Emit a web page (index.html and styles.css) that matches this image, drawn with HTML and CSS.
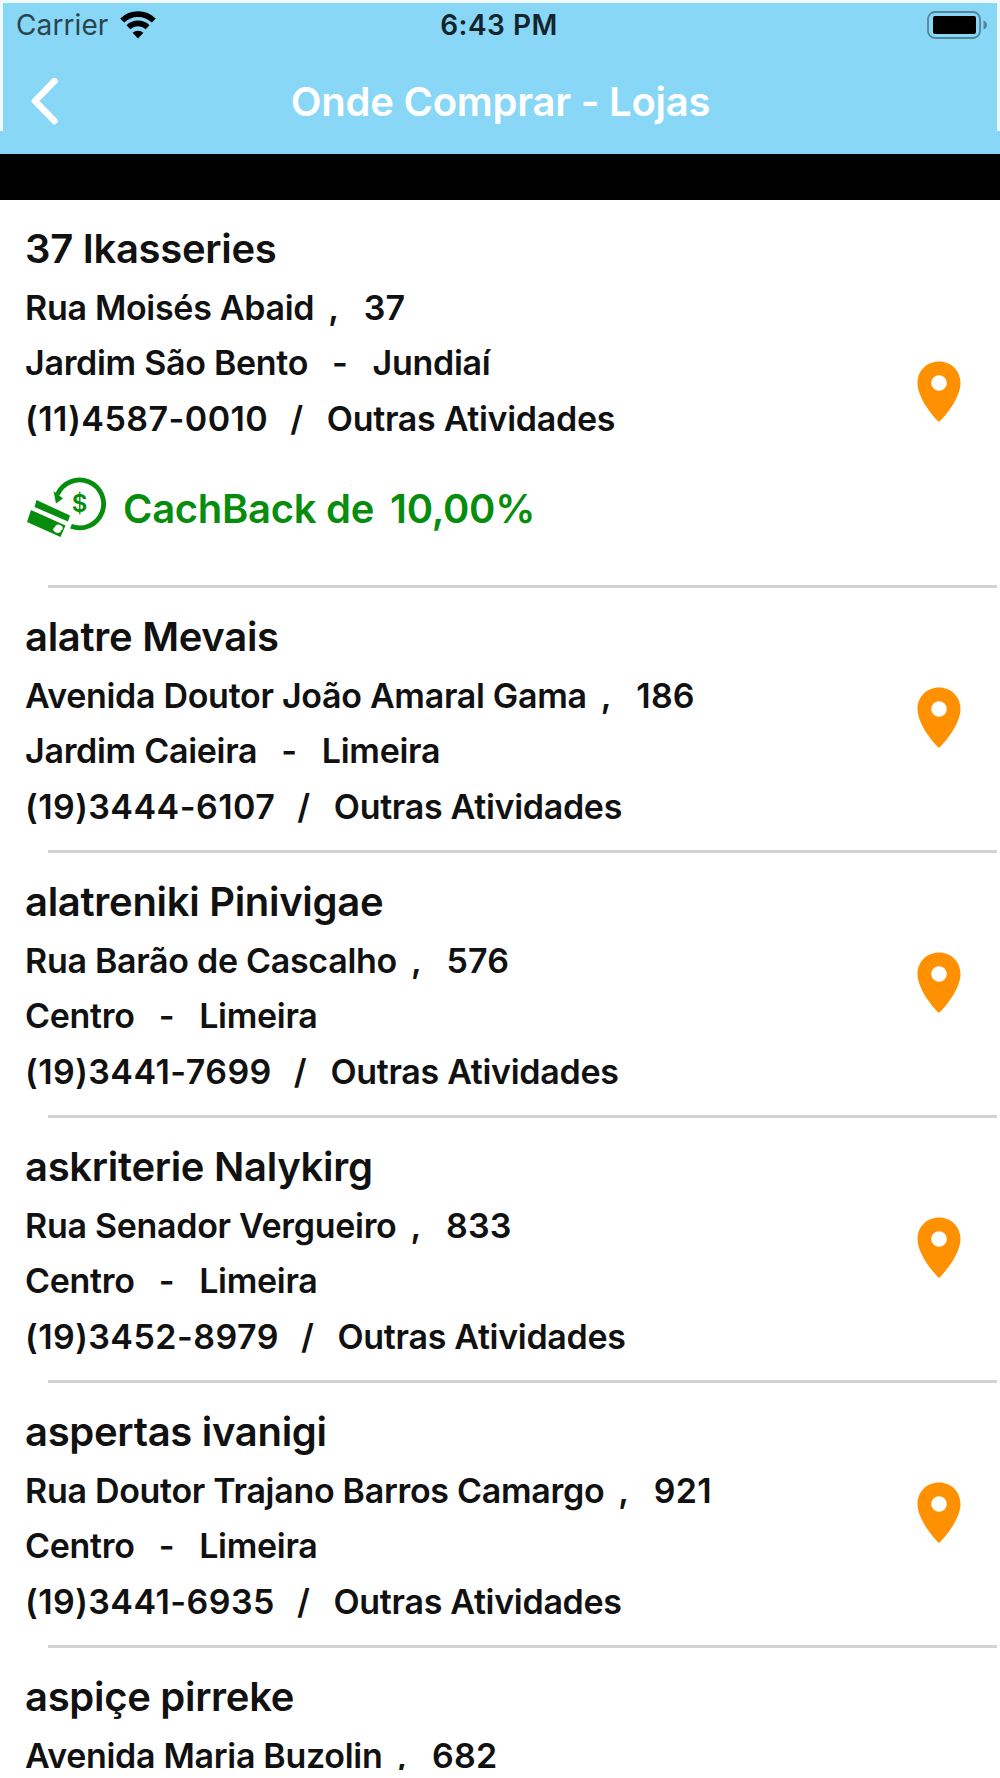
FILE: index.html
```html
<!DOCTYPE html>
<html lang="pt-br">
<head>
<meta charset="UTF-8">
<title>Onde Comprar - Lojas</title>
<link rel="stylesheet" href="styles.css">
</head>
<body>

<!-- shared icons -->
<svg class="defs" width="0" height="0">
	<symbol id="pin" viewBox="0 0 44 62">
		<path fill-rule="evenodd" d="M22 0.500C9.800 0.500 0.500 9.800 0.500 22C0.500 36 14.500 54 22 61C29.500 54 43.500 36 43.500 22C43.500 9.800 34.200 0.500 22 0.500ZM22 14.200A7.800 7.800 0 1 1 22 29.800A7.800 7.800 0 1 1 22 14.200Z"/>
	</symbol>
</svg>

<div class="screen">

<header class="header">
	<div class="status">
		<div class="carrier">
			<span>Carrier</span>
			<svg class="wifi" width="36" height="28" viewBox="0 0 36 28">
				<path d="M2.200 9.600A22.500 22.500 0 0 1 33.800 9.600M8.400 16.200A14 14 0 0 1 27.600 16.200" fill="none" stroke="#000" stroke-width="5.600"/>
				<path d="M18 27.500L12.600 21.800A8 8 0 0 1 23.400 21.800Z"/>
			</svg>
		</div>
		<div class="clock">6:43 PM</div>
		<svg class="battery" width="62" height="28" viewBox="0 0 62 28">
			<rect x="2" y="1" width="52" height="26" rx="7" fill="none" stroke="#548698" stroke-width="1.800"/>
			<rect x="7" y="5" width="43" height="18" rx="2"/>
			<path d="M57.500 9.500Q61 11 61 14T57.500 18.500Z" fill="#548698"/>
		</svg>
	</div>
	<div class="navbar">
		<svg class="back" width="30" height="48" viewBox="0 0 30 48">
			<path d="M24.500 3L5 23L24.500 43"/>
		</svg>
		<h1 class="title">Onde Comprar - Lojas</h1>
	</div>
</header>

<div class="banner"></div>

<ul class="stores">
	<li class="store store-cashback">
		<div class="store-main">
			<div class="info">
				<h2 class="name">37 Ikasseries</h2>
				<p class="line address"><span>Rua Moisés Abaid</span><i>,</i><span>37</span></p>
				<p class="line city"><span>Jardim São Bento</span><i>-</i><span>Jundiaí</span></p>
				<p class="line contact"><span class="phone">(11)4587-0010</span><i>/</i><span>Outras Atividades</span></p>
				<div class="cashback">
					<svg width="80" height="64" viewBox="0 0 80 64">
						<path d="M30.500 18.500A24 24 0 1 1 44 50.300" fill="none" stroke="#078d0d" stroke-width="4.800"/>
						<path d="M26.500 15L36 22.500L29 27.500Z"/>
						<path d="M9.500 24L43 39.500L41 45.500L7.500 31Z"/>
						<path fill-rule="evenodd" d="M4 34L38.500 49.500L33.500 61L0 46ZM28 51A4 3 20 1 0 34 54.500A4 3 20 1 0 28 51Z"/>
						<text x="52.500" y="36" class="dollar">$</text>
					</svg>
					<span>CachBack de</span><span>10,00%</span>
				</div>
			</div>
			<svg class="pin"><use href="#pin"/></svg>
		</div>
		<div class="divider"></div>
	</li>
	<li class="store">
		<div class="store-main">
			<div class="info">
				<h2 class="name">alatre Mevais</h2>
				<p class="line address"><span>Avenida Doutor João Amaral Gama</span><i>,</i><span>186</span></p>
				<p class="line city"><span>Jardim Caieira</span><i>-</i><span>Limeira</span></p>
				<p class="line contact"><span class="phone">(19)3444-6107</span><i>/</i><span>Outras Atividades</span></p>
			</div>
			<svg class="pin"><use href="#pin"/></svg>
		</div>
		<div class="divider"></div>
	</li>
	<li class="store">
		<div class="store-main">
			<div class="info">
				<h2 class="name">alatreniki Pinivigae</h2>
				<p class="line address"><span>Rua Barão de Cascalho</span><i>,</i><span>576</span></p>
				<p class="line city"><span>Centro</span><i>-</i><span>Limeira</span></p>
				<p class="line contact"><span class="phone">(19)3441-7699</span><i>/</i><span>Outras Atividades</span></p>
			</div>
			<svg class="pin"><use href="#pin"/></svg>
		</div>
		<div class="divider"></div>
	</li>
	<li class="store">
		<div class="store-main">
			<div class="info">
				<h2 class="name">askriterie Nalykirg</h2>
				<p class="line address"><span>Rua Senador Vergueiro</span><i>,</i><span>833</span></p>
				<p class="line city"><span>Centro</span><i>-</i><span>Limeira</span></p>
				<p class="line contact"><span class="phone">(19)3452-8979</span><i>/</i><span>Outras Atividades</span></p>
			</div>
			<svg class="pin"><use href="#pin"/></svg>
		</div>
		<div class="divider"></div>
	</li>
	<li class="store">
		<div class="store-main">
			<div class="info">
				<h2 class="name">aspertas ivanigi</h2>
				<p class="line address"><span>Rua Doutor Trajano Barros Camargo</span><i>,</i><span>921</span></p>
				<p class="line city"><span>Centro</span><i>-</i><span>Limeira</span></p>
				<p class="line contact"><span class="phone">(19)3441-6935</span><i>/</i><span>Outras Atividades</span></p>
			</div>
			<svg class="pin"><use href="#pin"/></svg>
		</div>
		<div class="divider"></div>
	</li>
	<li class="store">
		<div class="store-main">
			<div class="info">
				<h2 class="name">aspiçe pirreke</h2>
				<p class="line address"><span>Avenida Maria Buzolin</span><i>,</i><span>682</span></p>
			</div>
		</div>
	</li>
</ul>

</div>

</body>
</html>
```
FILE: styles.css
```css
* {
	box-sizing: border-box;
	margin: 0;
	padding: 0;
}

body {
	background: #fff;
	color: #111;
	font-family: Inter, "Liberation Sans", sans-serif;
}

.defs {
	display: block;
}

.screen {
	width: 1000px;
	height: 1770px;
	overflow: hidden;
}

/* header */
.header {
	height: 154px;
	padding: 3px;
	background: linear-gradient(#f0f9fe, #f0f9fe) 0 0 / 100% 3px no-repeat,
		linear-gradient(#f0f9fe, #f0f9fe) 0 0 / 3px 131px no-repeat,
		linear-gradient(#f0f9fe, #f0f9fe) 100% 0 / 3px 131px no-repeat,
		#88d7f7;
}

.status {
	display: grid;
	grid-template-columns: 1fr auto 1fr;
	align-items: center;
	height: 44px;
	padding: 0 9px 0 13px;
}

.carrier {
	display: flex;
	align-items: center;
	gap: 12px;
	font-size: 28px;
	letter-spacing: 0.1px;
	color: #2b444e;
}

.clock {
	margin-right: 6px;
	font-size: 28px;
	font-weight: 600;
	letter-spacing: 0.5px;
	color: #14242b;
}

.battery {
	justify-self: end;
}

.navbar {
	display: grid;
	grid-template-columns: 60px 1fr 86px;
	align-items: center;
	height: 105px;
	padding: 4px 0 0 27px;
}

.back path {
	fill: none;
	stroke: #fff;
	stroke-width: 6.5;
	stroke-linecap: round;
	stroke-linejoin: round;
}

.title {
	font-size: 40px;
	font-weight: 600;
	letter-spacing: -0.23px;
	text-align: center;
	color: #fff;
}

.banner {
	height: 46px;
	background: #000;
}

/* store list */
.stores {
	list-style: none;
}

.store {
	display: flex;
	flex-direction: column;
	height: 265px;
}

.store-cashback {
	height: 388px;
}

.store-main {
	flex: 1;
	display: flex;
	justify-content: space-between;
	align-items: center;
	padding: 0 39px 0 25px;
}

.info {
	align-self: flex-start;
	padding-top: 20px;
}

.name {
	height: 60px;
	line-height: 58px;
	font-size: 40px;
	font-weight: 600;
	letter-spacing: -0.3px;
}

.line {
	display: flex;
	height: 55.4px;
	line-height: 55.4px;
	font-size: 34px;
	font-weight: 600;
	letter-spacing: -0.3px;
	white-space: pre;
}

.line i {
	font-style: normal;
}

.address i {
	margin: 0 25px 0 14px;
}

.address i + span {
	letter-spacing: 0.2px;
}

.city i {
	margin: 0 25px 0 24px;
}

.contact i {
	margin: 0 24px 0 22px;
}

.phone {
	letter-spacing: 0.45px;
}

.cashback {
	display: flex;
	align-items: center;
	gap: 16px;
	height: 62px;
	margin: 31px 0 0 2px;
	font-size: 40px;
	font-weight: 600;
	letter-spacing: -0.3px;
	color: #078d0d;
	fill: #078d0d;
}

.dollar {
	font-size: 24px;
	font-weight: 600;
	text-anchor: middle;
}

.pin {
	width: 44px;
	height: 62px;
	margin-bottom: 2px;
	fill: #ff9000;
}

.divider {
	height: 3px;
	margin: 0 3px 0 48px;
	background: #d3d3d3;
}
```
